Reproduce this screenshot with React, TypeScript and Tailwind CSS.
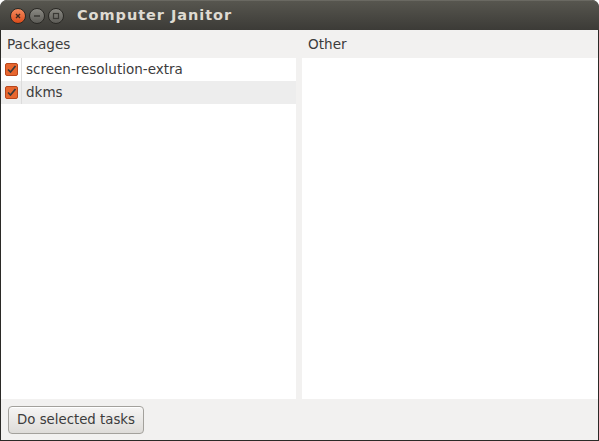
import React from "react";

const packages = [
  { name: "screen-resolution-extra", selected: false },
  { name: "dkms", selected: true },
];

const Check = () => (
  <svg width="13" height="13" viewBox="0 0 13 13" className="shrink-0">
    <rect x="0.5" y="0.5" width="12" height="12" rx="1.5" fill="#e8672f" stroke="#b8461c" />
    <path d="M3 6.5 L5.5 9 L10.5 3" fill="none" stroke="#3a3a3a" strokeWidth="1.7" />
  </svg>
);

const WinButton = ({ kind }: { kind: "close" | "min" | "max" }) => {
  if (kind === "close")
    return (
      <div className="w-[16px] h-[16px] rounded-full bg-gradient-to-b from-[#f38a5c] to-[#db4a16] border border-[#2a2925] flex items-center justify-center">
        <svg width="8" height="8" viewBox="0 0 8 8">
          <path d="M2 2 L6 6 M6 2 L2 6" stroke="#3c2a20" strokeWidth="1.4" />
        </svg>
      </div>
    );
  return (
    <div className="w-[16px] h-[16px] rounded-full bg-gradient-to-b from-[#8a8983] to-[#5d5c57] border border-[#2a2925] flex items-center justify-center">
      <svg width="8" height="8" viewBox="0 0 8 8">
        {kind === "min" ? (
          <path d="M1 4 L7 4" stroke="#3a3935" strokeWidth="1.4" />
        ) : (
          <rect x="1.5" y="1.5" width="5" height="5" fill="none" stroke="#3a3935" strokeWidth="1.2" />
        )}
      </svg>
    </div>
  );
};

export default function App() {
  return (
    <div
      className="w-[599px] h-[441px] flex flex-col bg-[#2b2a27] rounded-t-[7px] overflow-hidden"
      style={{ fontFamily: '"DejaVu Sans", "Open Sans", sans-serif' }}
    >
      <div className="h-[30px] shrink-0 flex items-center bg-gradient-to-b from-[#57564f] to-[#3c3b37] pl-[10px] border-t border-[#6a6962] rounded-t-[7px]">
        <div className="flex items-center gap-[3px]">
          <WinButton kind="close" />
          <WinButton kind="min" />
          <WinButton kind="max" />
        </div>
        <div className="ml-[13px] text-[14.5px] font-bold text-[#dfdbd2] tracking-[0.95px]">Computer Janitor</div>
      </div>
      <div className="flex-1 flex flex-col bg-[#f2f1f0] mx-[1px] mb-[1px]">
        <div className="flex-1 flex gap-[6px]">
          <div className="w-[295px] flex flex-col">
            <div className="h-[28px] flex items-center pl-[6px] text-[13.6px] text-[#3c3c3c]">Packages</div>
            <div className="flex-1 bg-white">
              {packages.map((p) => (
                <div
                  key={p.name}
                  className={`h-[23px] flex items-center ${p.selected ? "bg-[#ededed]" : "bg-white"}`}
                >
                  <div className="w-[21px] h-full flex items-center justify-center border-r border-[#dcdcdc] pl-[1px]">
                    <Check />
                  </div>
                  <div className="pl-[4px] text-[13.5px] text-[#3c3c3c]">{p.name}</div>
                </div>
              ))}
            </div>
          </div>
          <div className="flex-1 flex flex-col">
            <div className="h-[28px] flex items-center pl-[6px] text-[13.6px] text-[#3c3c3c]">Other</div>
            <div className="flex-1 bg-white" />
          </div>
        </div>
        <div className="h-[41px] shrink-0 flex items-center pl-[7px]">
          <button className="h-[28px] w-[136px] rounded-[4px] border border-[#a3a19c] bg-gradient-to-b from-[#f6f5f4] to-[#dedcd9] text-[13.3px] text-[#3c3c3c] shadow-[inset_0_1px_0_#ffffff]">
            Do selected tasks
          </button>
        </div>
      </div>
    </div>
  );
}
